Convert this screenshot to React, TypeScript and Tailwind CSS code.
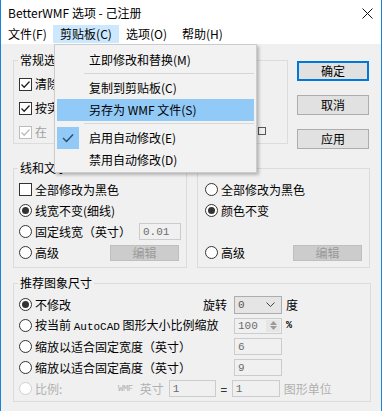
import React from "react";

function Check({ checked, disabled }: { checked?: boolean; disabled?: boolean }) {
  return (
    <span
      className={`w-[13px] h-[13px] shrink-0 border bg-white flex items-center justify-center ${
        disabled ? "border-[#bcbcbc]" : "border-[#333333]"
      }`}
    >
      {checked && (
        <svg width="11" height="11" viewBox="0 0 11 11">
          <path d="M1.5 5.5 L4.2 8.2 L9.5 2.5" fill="none" stroke={disabled ? "#bcbcbc" : "#222"} strokeWidth="1.3" />
        </svg>
      )}
    </span>
  );
}

function Radio({ checked, disabled }: { checked?: boolean; disabled?: boolean }) {
  return (
    <span
      className={`w-[13px] h-[13px] shrink-0 rounded-full border bg-white flex items-center justify-center ${
        disabled ? "border-[#cfcfcf]" : "border-[#333333]"
      }`}
    >
      {checked && <span className="w-[7px] h-[7px] rounded-full bg-[#333333]" />}
    </span>
  );
}

function Field({ value, w }: { value: string; w: string }) {
  return (
    <span
      className={`${w} h-[17px] shrink-0 border border-[#cccccc] bg-[#f0f0f0] flex items-center pl-[3px] font-['Liberation_Mono',monospace] text-[11px] text-[#6d6d6d]`}
    >
      {value}
    </span>
  );
}

function Btn({ label, primary }: { label: string; primary?: boolean }) {
  return (
    <div
      className={`w-[72px] h-[20px] flex items-center justify-center bg-[#e1e1e1] ${
        primary ? "border-2 border-[#0078d7]" : "border border-[#adadad]"
      }`}
    >
      {label}
    </div>
  );
}

function EditBtn() {
  return (
    <div className="w-[69px] h-[16px] flex items-center justify-center bg-[#cccccc] border border-[#bfbfbf] text-[#9a9a9a]">
      编辑
    </div>
  );
}

function Legend({ children }: { children: React.ReactNode }) {
  return <legend className="ml-[-1px] px-[2px] leading-[14px]">{children}</legend>;
}

export default function App() {
  return (
    <div className="w-[382px] h-[411px] relative overflow-hidden bg-[#f0f0f0] border-x border-[#1883d7] font-['Noto_Sans_CJK_SC',sans-serif] text-[12px] text-black leading-[16px]">
      {/* Title */}
      <div className="h-6 bg-white flex items-center pl-[7px]">
        <span className="pt-[2px]">BetterWMF 选项 - 己注册</span>
        <svg className="ml-auto mr-[8px] mt-[3px]" width="11" height="11" viewBox="0 0 11 11">
          <path d="M0.5 0.5 L10.5 10.5 M10.5 0.5 L0.5 10.5" stroke="#111" strokeWidth="1" />
        </svg>
      </div>

      {/* Menu bar */}
      <div className="h-5 bg-white flex items-stretch">
        <div className="w-[52px] pl-[7px] flex items-center">文件(F)</div>
        <div className="w-[66px] flex items-center justify-center bg-[#cce8ff] my-[1px]">剪贴板(C)</div>
        <div className="w-[57px] pl-[7px] flex items-center">选项(O)</div>
        <div className="pl-[6px] flex items-center">帮助(H)</div>
      </div>

      {/* Body */}
      <div className="pl-[12px] pt-[9px] flex flex-col">
        <div className="flex">
          <fieldset className="w-[275px] h-[91px] border border-[#dcdcdc] pl-[5px] pt-[5px]">
            <Legend>常规选项</Legend>
            <div className="h-[24px] flex items-center gap-[3px]">
              <Check checked />
              <span>清除背景</span>
            </div>
            <div className="h-[24px] flex items-center gap-[3px]">
              <Check checked />
              <span>按实际尺寸</span>
            </div>
            <div className="h-[24px] flex items-center gap-[3px] text-[#a0a0a0]">
              <Check checked disabled />
              <span>在</span>
              <span className="ml-auto mr-[21px] mb-[3px] w-[8px] h-[8px] border border-[#555555]" />
            </div>
          </fieldset>
          <div className="ml-[9px] pt-[8px] flex flex-col gap-[14px]">
            <Btn label="确定" primary />
            <Btn label="取消" />
            <Btn label="应用" />
          </div>
        </div>

        <div className="mt-[12px] flex gap-[10px] items-start">
          <fieldset className="w-[174px] h-[107px] border border-[#dcdcdc] pl-[5px] pt-[4px]">
            <Legend>线和文字</Legend>
            <div className="h-[21px] flex items-center gap-[3px]">
              <Check />
              <span>全部修改为黑色</span>
            </div>
            <div className="h-[21px] flex items-center gap-[3px]">
              <Radio checked />
              <span>线宽不变(细线)</span>
            </div>
            <div className="h-[21px] flex items-center gap-[3px]">
              <Radio />
              <span>固定线宽（英寸）</span>
              <span className="ml-auto mr-[5px]">
                <Field value="0.01" w="w-[42px]" />
              </span>
            </div>
            <div className="h-[21px] flex items-center gap-[3px]">
              <Radio />
              <span>高级</span>
              <span className="ml-auto mr-[7px]">
                <EditBtn />
              </span>
            </div>
          </fieldset>
          {/* colour group: its caption lies under the open menu */}
          <div className="mt-[7px] w-[173px] h-[100px] border border-[#dcdcdc] pl-[7px] pt-[10px]">
            <div className="h-[21px] flex items-center gap-[3px]">
              <Radio />
              <span>全部修改为黑色</span>
            </div>
            <div className="h-[21px] flex items-center gap-[3px]">
              <Radio checked />
              <span>颜色不变</span>
            </div>
            <div className="h-[21px]" />
            <div className="h-[21px] flex items-center gap-[3px]">
              <Radio />
              <span>高级</span>
              <span className="ml-auto mr-[7px]">
                <EditBtn />
              </span>
            </div>
          </div>
        </div>

        <fieldset className="mt-[8px] w-[358px] h-[126px] border border-[#dcdcdc] pl-[5px] pt-[4px]">
          <Legend>推荐图象尺寸</Legend>
          <div className="h-[21px] flex items-center">
            <div className="w-[215px] flex items-center gap-[3px]">
              <Radio checked />
              <span>不修改</span>
              <span className="ml-auto mr-[7px]">旋转</span>
            </div>
            <div className="w-[48px] h-[18px] border border-[#adadad] bg-[#e5e5e5] flex items-center pl-[3px] font-['Liberation_Mono',monospace] text-[11px] text-[#555555]">
              0
              <svg className="ml-auto mr-[6px]" width="9" height="6" viewBox="0 0 9 6">
                <path d="M0.5 0.5 L4.5 4.5 L8.5 0.5" fill="none" stroke="#444" strokeWidth="1" />
              </svg>
            </div>
            <span className="ml-[4px]">度</span>
          </div>
          <div className="h-[21px] flex items-center">
            <div className="w-[215px] flex items-center gap-[3px]">
              <Radio />
              <span>
                按当前 <span className="font-['Liberation_Mono',monospace] text-[11px]">AutoCAD</span> 图形大小比例缩放
              </span>
            </div>
            <div className="w-[48px] h-[16px] border border-[#cccccc] bg-[#f0f0f0] flex items-center pl-[3px] font-['Liberation_Mono',monospace] text-[11px] text-[#6d6d6d]">
              100
              <span className="ml-auto mr-[1px] w-[14px] h-[12px] flex flex-col items-center justify-center gap-[1px] bg-[#e6e6e6]">
                <svg width="7" height="4" viewBox="0 0 7 4">
                  <path d="M0 4 L3.5 0 L7 4 Z" fill="#9a9a9a" />
                </svg>
                <svg width="7" height="4" viewBox="0 0 7 4">
                  <path d="M0 0 L3.5 4 L7 0 Z" fill="#9a9a9a" />
                </svg>
              </span>
            </div>
            <span className="ml-[4px] font-['Liberation_Mono',monospace] text-[10px] font-bold">%</span>
          </div>
          <div className="h-[21px] flex items-center">
            <div className="w-[215px] flex items-center gap-[3px]">
              <Radio />
              <span>缩放以适合固定宽度（英寸）</span>
            </div>
            <Field value="6" w="w-[48px]" />
          </div>
          <div className="h-[21px] flex items-center">
            <div className="w-[215px] flex items-center gap-[3px]">
              <Radio />
              <span>缩放以适合固定高度（英寸）</span>
            </div>
            <Field value="9" w="w-[48px]" />
          </div>
          <div className="h-[21px] flex items-center text-[#b0b0b0]">
            <div className="w-[99px] flex items-center gap-[3px]">
              <Radio disabled />
              <span>比例:</span>
            </div>
            <span className="font-['Liberation_Mono',monospace] text-[9px] tracking-[-0.5px]">WMF</span>
            <span className="ml-[7px]">英寸</span>
            <span className="ml-[5px]">
              <Field value="1" w="w-[47px]" />
            </span>
            <span className="w-[16px] text-center text-black">=</span>
            <Field value="1" w="w-[48px]" />
            <span className="ml-[4px]">图形单位</span>
          </div>
        </fieldset>
      </div>

      {/* Clipboard menu (open) */}
      <div className="absolute left-[53px] top-[44px] w-[203px] h-[129px] bg-[#f2f2f2] border border-[#cccccc] shadow-[2px_2px_3px_rgba(0,0,0,0.25)] px-[2px] pt-[4px]">
        <div className="h-[22px] flex items-center pl-[32px]">立即修改和替换(M)</div>
        <div className="h-[6px] pl-[27px] pt-[2px]">
          <div className="h-px bg-[#d7d7d7]" />
        </div>
        <div className="h-[22px] flex items-center pl-[32px]">复制到剪贴板(C)</div>
        <div className="h-[22px] flex items-center pl-[32px] bg-[#91c9f7]">另存为 WMF 文件(S)</div>
        <div className="h-[6px] pl-[27px] pt-[2px]">
          <div className="h-px bg-[#d7d7d7]" />
        </div>
        <div className="h-[22px] flex items-center">
          <span className="w-[22px] h-[22px] bg-[#91c9f7] flex items-center justify-center">
            <svg width="12" height="10" viewBox="0 0 12 10">
              <path d="M1 5 L4.5 8.5 L11 1.5" fill="none" stroke="#2a4a6b" strokeWidth="1.4" />
            </svg>
          </span>
          <span className="pl-[10px]">启用自动修改(E)</span>
        </div>
        <div className="h-[22px] flex items-center pl-[32px]">禁用自动修改(D)</div>
      </div>
    </div>
  );
}
